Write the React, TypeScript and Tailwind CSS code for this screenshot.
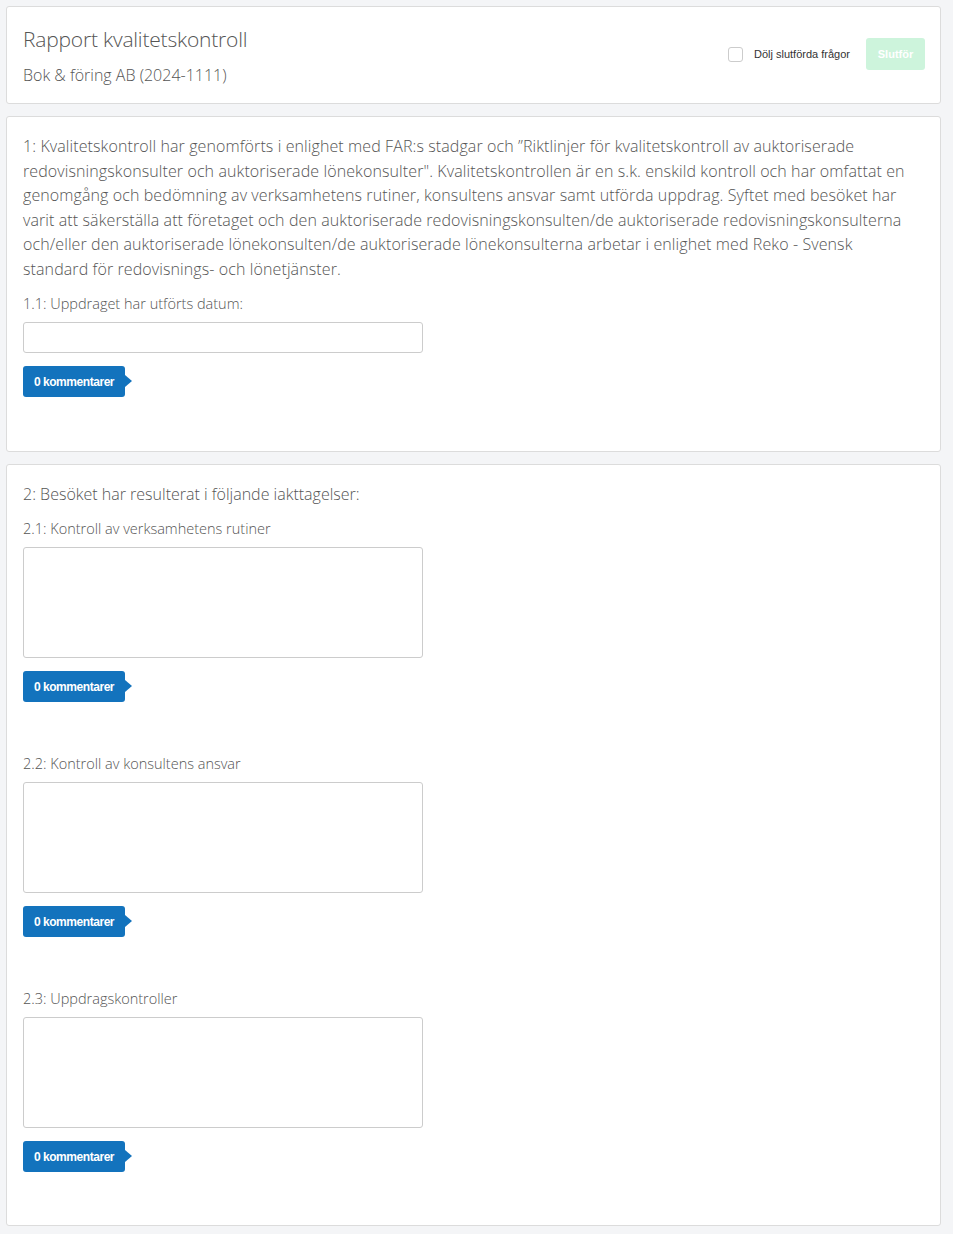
import React from "react";

const light = { fontFamily: '"Open Sans", "Noto Sans", sans-serif', fontWeight: 300 } as const;

function CommentButton() {
  return (
    <div className="relative inline-flex">
      <button
        className="h-[31px] w-[102px] rounded-[3px] bg-[#1373bd] text-[12px] font-bold text-white tracking-[-0.45px]"
        style={{ fontFamily: '"Liberation Sans Narrow", "Liberation Sans", Arial, sans-serif' }}
      >
        0 kommentarer
      </button>
      <span className="absolute right-[-7px] top-[9px] h-0 w-0 border-y-[6px] border-l-[7px] border-y-transparent border-l-[#1373bd]" />
    </div>
  );
}

function Question({ label, tall }: { label: string; tall?: boolean }) {
  return (
    <div>
      <div className="text-[14.5px] leading-[20px] text-[#555]" style={light}>
        {label}
      </div>
      {tall ? (
        <textarea className="mt-[8px] block h-[111px] w-[400px] resize-none rounded-[3px] border border-[#ccc] bg-white" />
      ) : (
        <input className="mt-[8px] block h-[31px] w-[400px] rounded-[3px] border border-[#ccc] bg-white" />
      )}
      <div className="mt-[13px]">
        <CommentButton />
      </div>
    </div>
  );
}

export default function App() {
  return (
    <div className="min-h-[1234px] bg-[#f4f5f7] pl-[6px] pr-[12px] pt-[6px] pb-[8px]">
      <div className="flex items-center justify-between rounded-[3px] border border-[#dcdcdc] bg-white pl-[16px] pr-[15px] h-[98px]">
        <div className="-mt-[1px]">
          <div className="text-[21px] leading-[30px] text-[#555] tracking-[-0.2px]" style={light}>
            Rapport kvalitetskontroll
          </div>
          <div className="mt-[10px] text-[16px] leading-[22px] text-[#555]" style={light}>
            Bok &amp; föring AB (2024-1111)
          </div>
        </div>
        <div className="flex items-center -mt-[2px]">
          <span className="mr-[11px] h-[15px] w-[15px] rounded-[3px] border border-[#ccc] bg-white" />
          <span className="text-[11px] text-[#333]" style={{ fontFamily: '"Liberation Sans", Arial, sans-serif' }}>
            Dölj slutförda frågor
          </span>
          <button
            className="ml-[16px] h-[32px] w-[59px] rounded-[3px] bg-[#cdf4dc] text-[11px] font-bold text-white"
            style={{ fontFamily: '"Liberation Sans", Arial, sans-serif' }}
          >
            Slutför
          </button>
        </div>
      </div>

      <div className="mt-[12px] rounded-[3px] border border-[#dcdcdc] bg-white px-[16px] pt-[17px] pb-[16px]">
        <div className="pr-[4px] text-[16px] leading-[24.5px] text-[#555] tracking-[0.1px]" style={light}>
          1: Kvalitetskontroll har genomförts i enlighet med FAR:s stadgar och ”Riktlinjer för kvalitetskontroll av auktoriserade redovisningskonsulter och auktoriserade lönekonsulter". Kvalitetskontrollen är en s.k. enskild kontroll och har omfattat en genomgång och bedömning av verksamhetens rutiner, konsultens ansvar samt utförda uppdrag. Syftet med besöket har varit att säkerställa att företaget och den auktoriserade redovisningskonsulten/de auktoriserade redovisningskonsulterna och/eller den auktoriserade lönekonsulten/de auktoriserade lönekonsulterna arbetar i enlighet med Reko - Svensk standard för redovisnings- och lönetjänster.
        </div>
        <div className="mt-[13px] pb-[38px]">
          <Question label="1.1: Uppdraget har utförts datum:" />
        </div>
      </div>

      <div className="mt-[12px] rounded-[3px] border border-[#dcdcdc] bg-white px-[16px] pt-[17px] pb-[53px]">
        <div className="text-[16px] leading-[24px] text-[#555]" style={light}>
          2: Besöket har resulterat i följande iakttagelser:
        </div>
        <div className="mt-[13px] flex flex-col gap-[52px]">
          <Question label="2.1: Kontroll av verksamhetens rutiner" tall />
          <Question label="2.2: Kontroll av konsultens ansvar" tall />
          <Question label="2.3: Uppdragskontroller" tall />
        </div>
      </div>
    </div>
  );
}
